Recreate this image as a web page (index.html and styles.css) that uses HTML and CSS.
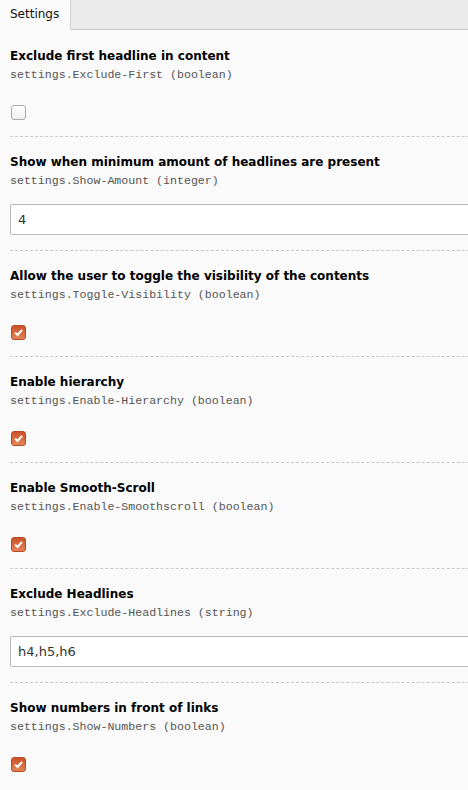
FILE: index.html
```html
<!DOCTYPE html>
<html>
<head>
<meta charset="utf-8">
<link rel="stylesheet" href="styles.css">
</head>
<body>
<div class="tabs">
  <div class="tab">Settings</div>
</div>
<div class="content">
  <div class="field first">
    <div class="label">Exclude first headline in content</div>
    <div class="key">settings.Exclude-First (boolean)</div>
    <span class="check"></span>
  </div>
  <div class="field text">
    <div class="label">Show when minimum amount of headlines are present</div>
    <div class="key">settings.Show-Amount (integer)</div>
    <div class="input">4</div>
  </div>
  <div class="field">
    <div class="label">Allow the user to toggle the visibility of the contents</div>
    <div class="key">settings.Toggle-Visibility (boolean)</div>
    <span class="check on"><svg viewBox="0 0 15 15"><path d="M3.6 7.6 L6.4 10.4 L11.6 4.4"/></svg></span>
  </div>
  <div class="field">
    <div class="label">Enable hierarchy</div>
    <div class="key">settings.Enable-Hierarchy (boolean)</div>
    <span class="check on"><svg viewBox="0 0 15 15"><path d="M3.6 7.6 L6.4 10.4 L11.6 4.4"/></svg></span>
  </div>
  <div class="field">
    <div class="label">Enable Smooth-Scroll</div>
    <div class="key">settings.Enable-Smoothscroll (boolean)</div>
    <span class="check on"><svg viewBox="0 0 15 15"><path d="M3.6 7.6 L6.4 10.4 L11.6 4.4"/></svg></span>
  </div>
  <div class="field text">
    <div class="label">Exclude Headlines</div>
    <div class="key">settings.Exclude-Headlines (string)</div>
    <div class="input">h4,h5,h6</div>
  </div>
  <div class="field">
    <div class="label">Show numbers in front of links</div>
    <div class="key">settings.Show-Numbers (boolean)</div>
    <span class="check on"><svg viewBox="0 0 15 15"><path d="M3.6 7.6 L6.4 10.4 L11.6 4.4"/></svg></span>
  </div>
</div>
</body>
</html>
```
FILE: styles.css
```css
html, body {
  margin: 0;
  padding: 0;
  background: #fafafa;
  overflow: hidden;
}
body {
  font-family: "DejaVu Sans", Verdana, sans-serif;
  color: #000;
  width: 468px;
}
.tabs {
  display: flex;
  height: 29px;
  background: #ebebeb;
  border-bottom: 1px solid #c9c9c9;
}
.tab {
  width: 71px;
  box-sizing: border-box;
  height: 30px;
  margin-bottom: -1px;
  background: #fafafa;
  border-right: 1px solid #d2d2d2;
  padding-left: 10px;
  font-size: 12px;
  line-height: 29px;
  color: #111;
}
.content {
  padding-left: 10px;
}
.field {
  border-top: 1px dashed #c8c8c8;
  padding-top: 17px;
  padding-bottom: 16px;
  width: 520px;
}
.field.text {
  padding-bottom: 15px;
}
.field.first {
  border-top: none;
  padding-top: 18px;
}
.label {
  font-size: 12px;
  font-weight: bold;
  line-height: 16px;
  white-space: nowrap;
}
.key {
  font-family: "Liberation Mono", "Courier New", monospace;
  font-size: 11.6px;
  line-height: 14px;
  margin-top: 4px;
  color: #555;
  white-space: nowrap;
}
.check {
  display: block;
  box-sizing: border-box;
  width: 15px;
  height: 15px;
  margin-top: 23px;
  margin-left: 1px;
  border: 1px solid #a9a9a9;
  border-radius: 3px;
  background: linear-gradient(#ffffff, #f0f0f0);
}
.check.on {
  border-color: #b44a20;
  background: linear-gradient(#c9532a, #e4845a);
}
.check svg {
  display: block;
  width: 13px;
  height: 13px;
}
.check path {
  fill: none;
  stroke: #fff;
  stroke-width: 2.3;
}
.input {
  box-sizing: border-box;
  margin-top: 16px;
  height: 31px;
  width: 500px;
  border: 1px solid #b9b9b9;
  border-radius: 2px;
  background: #fff;
  padding-left: 7px;
  font-size: 13px;
  line-height: 29px;
  color: #333;
}
```
